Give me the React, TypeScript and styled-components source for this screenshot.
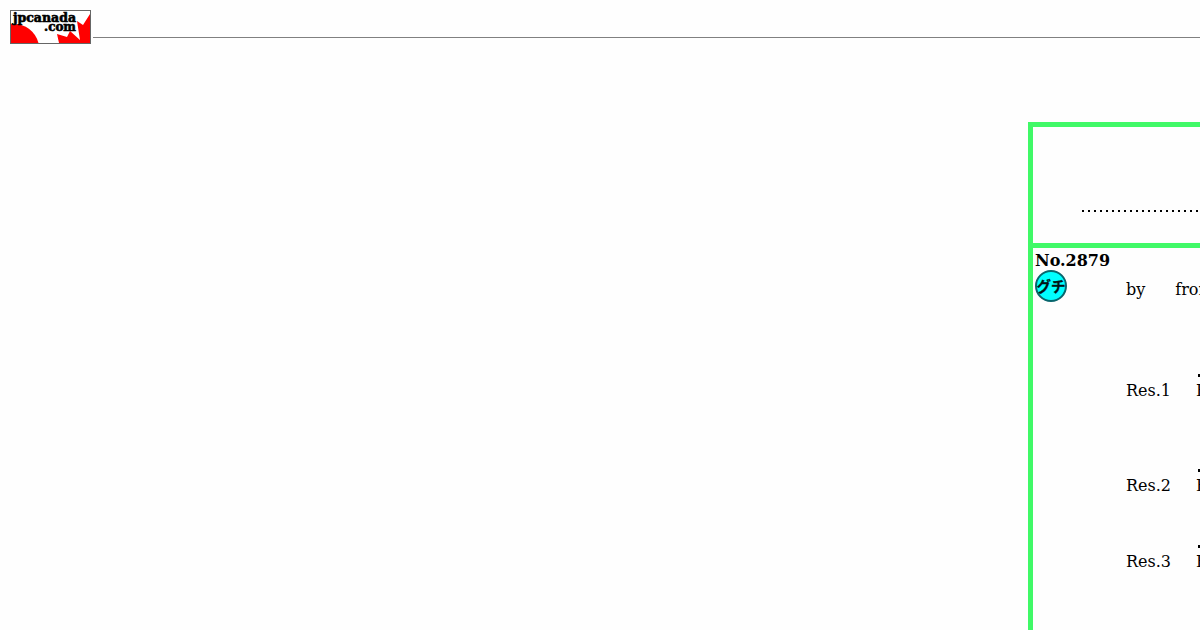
import React from "react";
import styled, { createGlobalStyle } from "styled-components";

const GlobalStyle = createGlobalStyle`
    body {
        margin: 0;
        background: #fefefe;
        overflow: hidden;
    }
`;

const Page = styled.div`
    width: 1200px;
    height: 630px;
    overflow: hidden;
    box-sizing: border-box;
    padding-top: 10px;
    color: #000;
    font-family: "DejaVu Serif", "Noto Sans CJK JP", serif;
    font-size: 16px;
    line-height: 19px;
`;

const Header = styled.header`
    display: flex;
    align-items: flex-start;
    gap: 2px;
    height: 34px;
    padding-left: 10px;
`;

const HeaderRule = styled.div`
    flex: 1;
    height: 1px;
    margin-top: 27px;
    background: #808080;
`;

const Board = styled.main`
    width: 400px;
    height: 520px;
    margin: 78px 0 0 1028px;
    box-sizing: border-box;
    border: 5px solid #40f967;
`;

const TitleCell = styled.section`
    height: 116px;
    box-sizing: border-box;
    padding: 83px 0 0 49px;
`;

const DottedLine = styled.div`
    height: 2px;
    background: repeating-linear-gradient(to right, #000 0 2px, transparent 2px 6px);
`;

const ThreadCell = styled.section`
    border-top: 5px solid #40f967;
    padding: 3px 0 0 2px;
`;

const ThreadNumber = styled.div`
    font-weight: bold;
    height: 19px;
`;

const ThreadHead = styled.div`
    display: flex;
    height: 32px;
`;

const Author = styled.div`
    display: flex;
    gap: 30px;
    margin: 10px 0 0 59px;
    white-space: nowrap;
`;

const Reply = styled.div<{ $gap: number }>`
    display: flex;
    height: 27px;
    margin: ${({ $gap }) => $gap}px 0 0 91px;
    white-space: nowrap;
`;

const ReplyLabel = styled.div`
    width: 70px;
    padding-top: 8px;
`;

const ReplyBody = styled.div`
    padding-top: 1px;
`;

const ReplyDots = styled.div`
    width: 120px;
    height: 3px;
    margin: 0 0 4px 2px;
    background: repeating-linear-gradient(to right, #000 0 3px, transparent 3px 6px);
`;

const LogoImage = styled.svg`
    display: block;
    flex: none;
`;

const BadgeImage = styled.svg`
    display: block;
    flex: none;
`;

const Logo: React.FC = () => (
    <LogoImage width="81" height="34" viewBox="0 0 81 34">
        <rect x="0.5" y="0.5" width="80" height="33" fill="#fff" />
        <path d="M1 14 C14 13 25 20 28.5 33 H1Z" fill="#f00" />
        <path d="M80 4V33H49L47 24L57 27L60 21L70 30L67 11L73 15Z" fill="#f00" />
        <rect x="0.5" y="0.5" width="80" height="33" fill="none" stroke="#666" />
        <g fontFamily="DejaVu Serif, serif" fontWeight="bold" stroke="#000" strokeWidth="0.6">
            <text x="3" y="11.5" fontSize="12" textLength="63" lengthAdjust="spacingAndGlyphs">jpcanada</text>
            <text x="34" y="20.5" fontSize="12" textLength="32" lengthAdjust="spacingAndGlyphs">.com</text>
        </g>
    </LogoImage>
);

const GuchiBadge: React.FC = () => (
    <BadgeImage width="32" height="32" viewBox="0 0 32 32">
        <circle cx="16" cy="16" r="15" fill="#0ff" stroke="#08666d" strokeWidth="2" />
        <text
            x="1.5"
            y="22"
            fontFamily="Noto Sans CJK JP, sans-serif"
            fontSize="15"
            fontWeight="700"
            stroke="#001416"
            strokeWidth="0.3"
            fill="#001416"
            textLength="29"
            lengthAdjust="spacingAndGlyphs"
        >
            グチ
        </text>
    </BadgeImage>
);

const REPLIES = [
    { id: 1, gap: 71 },
    { id: 2, gap: 68 },
    { id: 3, gap: 49 },
];

const App: React.FC = () => (
    <>
        <GlobalStyle />
        <Page>
            <Header>
                <Logo />
                <HeaderRule />
            </Header>
            <Board>
                <TitleCell>
                    <DottedLine />
                </TitleCell>
                <ThreadCell>
                    <ThreadNumber>No.2879</ThreadNumber>
                    <ThreadHead>
                        <GuchiBadge />
                        <Author>
                            <span>by</span>
                            <span>from</span>
                        </Author>
                    </ThreadHead>
                    {REPLIES.map(({ id, gap }) => (
                        <Reply key={id} $gap={gap}>
                            <ReplyLabel>Res.{id}</ReplyLabel>
                            <ReplyBody>
                                <ReplyDots />
                                From
                            </ReplyBody>
                        </Reply>
                    ))}
                </ThreadCell>
            </Board>
        </Page>
    </>
);

export default App;
